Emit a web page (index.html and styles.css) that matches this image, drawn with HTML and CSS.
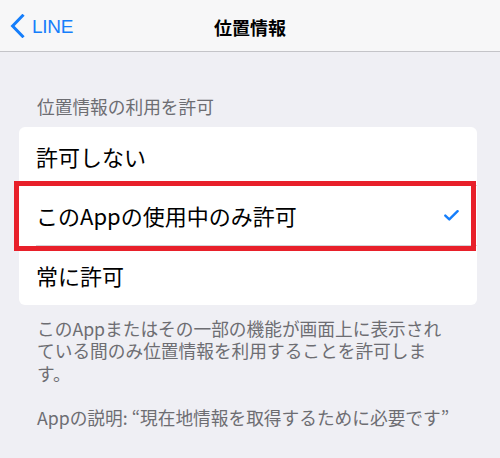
FILE: index.html
```html
<!DOCTYPE html>
<html lang="ja">
<head>
<meta charset="utf-8">
<link rel="stylesheet" href="styles.css">
</head>
<body>
<header class="nav">
  <a class="back">
    <svg class="chev" width="15" height="24" viewBox="0 0 15 24"><path d="M12.5 1.8 L2.6 12 L12.5 22.2" fill="none" stroke="#157efb" stroke-width="3" stroke-linecap="square" stroke-linejoin="miter"/></svg>
    <span class="back-label">LINE</span>
  </a>
  <h1 class="title">位置情報</h1>
  <div></div>
</header>
<main class="content">
  <p class="section-head">位置情報の利用を許可</p>
  <ul class="card">
    <li class="row"><div class="row-inner sep">許可しない</div></li>
    <li class="row selected">
      <div class="row-inner sep">このAppの使用中のみ許可
        <svg class="check" width="15" height="11" viewBox="0 0 15 11"><path d="M1.3 5.6 L5.3 9.4 L13.6 1.2" fill="none" stroke="#157efb" stroke-width="2.4" stroke-linecap="round" stroke-linejoin="round"/></svg>
      </div>
      <span class="highlight"></span>
    </li>
    <li class="row"><div class="row-inner">常に許可</div></li>
  </ul>
  <div class="footer">
    <p>このAppまたはその一部の機能が画面上に表示されている間のみ位置情報を利用することを許可します。</p>
    <p class="desc">Appの説明: “現在地情報を取得するために必要です”</p>
  </div>
</main>
</body>
</html>
```
FILE: styles.css
```css
* { box-sizing: border-box; }
html, body { margin: 0; padding: 0; }
body {
  background: #efeff4;
  font-family: "Noto Sans CJK JP", "Noto Sans", sans-serif;
  color: #000;
  width: 500px;
  height: 458px;
  overflow: hidden;
}
.nav {
  height: 52px;
  background: #f7f7f8;
  border-bottom: 1px solid #c4c4c8;
  display: grid;
  grid-template-columns: 1fr auto 1fr;
  align-items: center;
}
.back {
  display: flex;
  align-items: center;
  padding-left: 10px;
  gap: 7px;
  color: #157efb;
}
.chev { display: block; margin-top: 1px; }
.back-label {
  font-family: "Liberation Sans", sans-serif;
  font-size: 19px;
  letter-spacing: -0.3px;
  margin-top: 2px;
}
.title {
  margin: 0;
  font-size: 18px;
  font-weight: 700;
  line-height: 22px;
  margin-top: 2px;
}
.content { padding: 0; }
.section-head {
  margin: 43px 0 10px 0;
  padding-left: 37px;
  font-size: 17.7px;
  line-height: 22px;
  color: #6d6d72;
}
.card {
  list-style: none;
  margin: 0 23px 0 19px;
  padding: 0;
  background: #fff;
  border-radius: 6px;
}
.row {
  position: relative;
  height: 59.33px;
  padding-left: 17px;
  display: flex;
}
.row-inner {
  flex: 1;
  display: flex;
  align-items: center;
  justify-content: space-between;
  padding-right: 18px;
  font-size: 22px;
  line-height: 28px;
}
.row-inner.sep { border-bottom: 1px solid #d4d4d8; }
.check { display: block; margin-top: 1px; }
.highlight {
  position: absolute;
  top: -5px;
  bottom: -5px;
  left: -5px;
  right: 1px;
  border: 5px solid #e8202a;
  pointer-events: none;
}
.footer {
  padding: 12px 0 0 37px;
  width: 456px;
  color: #6d6d72;
  font-size: 17.7px;
  line-height: 22.5px;
}
.footer p { margin: 0; width: 418px; }
.footer .desc { margin-top: 21.5px; }
```
